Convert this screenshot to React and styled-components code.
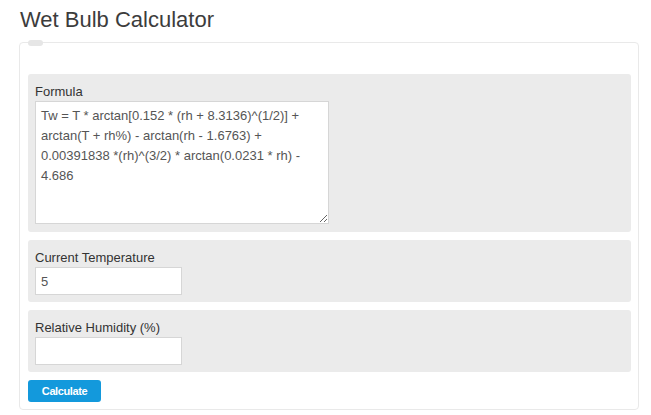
import React from "react";
import styled, { createGlobalStyle } from "styled-components";

const Global = createGlobalStyle`
  html, body { margin: 0; padding: 0; background: #ffffff; }
  body { font-family: "Liberation Sans", Arial, sans-serif; }
  * { box-sizing: border-box; }
`;

const Page = styled.div`
  padding: 7px 0 0 19px;
  width: 651px;
`;

const Title = styled.h1`
  margin: 0 0 9px 1px;
  font-family: "Liberation Sans", Arial, sans-serif;
  font-weight: 400;
  font-size: 22px;
  line-height: 26px;
  color: #3c3c3c;
`;

const Card = styled.form`
  position: relative;
  width: 620px;
  border: 1px solid #e9e9e9;
  border-radius: 4px;
  padding: 31px 7px 7px 8px;
  display: flex;
  flex-direction: column;
  gap: 8px;
`;

const Tab = styled.span`
  position: absolute;
  left: 8px;
  top: -3px;
  width: 15px;
  height: 6px;
  border-radius: 3px;
  background: #e6e6e6;
`;

const Section = styled.div`
  background: #ebebeb;
  border-radius: 3px;
  padding: 8px 7px 7px;
  display: flex;
  flex-direction: column;
  align-items: flex-start;
`;

const Label = styled.label`
  font-size: 13px;
  line-height: 19px;
  color: #333333;
`;

const TextArea = styled.textarea`
  display: block;
  width: 294px;
  height: 123px;
  margin: 0 0 1px;
  padding: 4px 5px;
  border: 1px solid #d6d6d6;
  background: #ffffff;
  font-family: "Liberation Sans", Arial, sans-serif;
  font-size: 13px;
  line-height: 20px;
  color: #555555;
  resize: both;
  overflow: hidden;
  outline: none;
`;

const Input = styled.input`
  display: block;
  width: 147px;
  height: 28px;
  margin: 0;
  padding: 0 5px;
  border: 1px solid #d6d6d6;
  background: #ffffff;
  font-family: "Liberation Sans", Arial, sans-serif;
  font-size: 13px;
  color: #555555;
  outline: none;
`;

const Button = styled.button`
  align-self: flex-start;
  width: 73px;
  height: 22px;
  padding: 0;
  border: none;
  border-radius: 3px;
  background: #1399dc;
  color: #ffffff;
  font-family: "Liberation Sans", Arial, sans-serif;
  font-weight: 700;
  font-size: 11px;
  letter-spacing: -0.4px;
  cursor: pointer;
`;

const formula =
  "Tw = T * arctan[0.152 * (rh + 8.3136)^(1/2)] + arctan(T + rh%) - arctan(rh - 1.6763) + 0.00391838 *(rh)^(3/2) * arctan(0.0231 * rh) - 4.686";

export default function App() {
  return (
    <>
      <Global />
      <Page>
        <Title>Wet Bulb Calculator</Title>
        <Card onSubmit={(e) => e.preventDefault()}>
          <Tab />
          <Section>
            <Label>Formula</Label>
            <TextArea defaultValue={formula} readOnly />
          </Section>
          <Section>
            <Label>Current Temperature</Label>
            <Input type="text" defaultValue="5" />
          </Section>
          <Section>
            <Label>Relative Humidity (%)</Label>
            <Input type="text" defaultValue="" />
          </Section>
          <Button type="submit">Calculate</Button>
        </Card>
      </Page>
    </>
  );
}
